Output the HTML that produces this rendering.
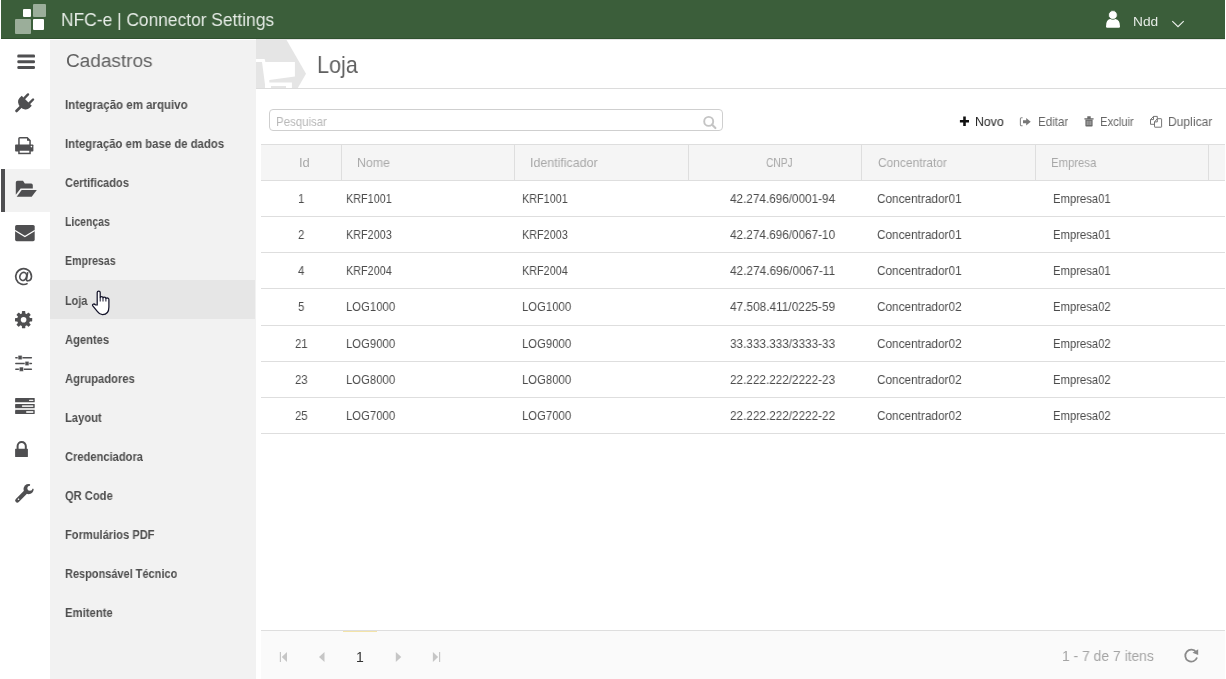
<!DOCTYPE html>
<html><head><meta charset="utf-8">
<style>
html,body{margin:0;padding:0;width:1226px;height:679px;overflow:hidden;background:#fff;position:relative;font-family:"Liberation Sans",sans-serif;}
.a{position:absolute;}
.t{position:absolute;line-height:0;white-space:nowrap;transform-origin:0 0;will-change:transform;}
#hdr{left:1px;top:0;width:1224px;height:38px;background:#3b5e3a;border-bottom:1px solid #2f512e;}
.sq{position:absolute;border-radius:1px;}
#side{left:50px;top:40px;width:206px;height:639px;background:#f2f2f2;}
.mi{position:absolute;left:65.6px;font-size:11.4px;font-weight:700;color:#505050;line-height:0;white-space:nowrap;}
.th{font-size:11.6px;color:#a9a9a9;}
.td{font-size:11.7px;color:#505050;}
.hl{position:absolute;left:261px;width:964px;height:1px;background:#dedede;}
.vl{position:absolute;top:144px;width:1px;height:36px;background:#dedede;}
</style></head>
<body>
<!-- header -->
<div id="hdr" class="a"></div>
<div class="sq" style="left:23px;top:9px;width:8px;height:8px;background:#fff"></div>
<div class="sq" style="left:32.5px;top:3.7px;width:13.5px;height:13.3px;background:#9bae9a"></div>
<div class="sq" style="left:15px;top:18.6px;width:16px;height:15.2px;background:#9bae9a"></div>
<div class="sq" style="left:32.5px;top:18.6px;width:11.5px;height:11.4px;background:#fff"></div>
<svg class="a" style="left:1100px;top:8px" width="26" height="24" viewBox="1100 8 26 24">
 <path d="M1106 26.5 Q1106 19.5 1110 19 L1115.4 19 Q1120 19.5 1120 26.5 Q1120 27.7 1118.8 27.7 L1107.2 27.7 Q1106 27.7 1106 26.5 Z" fill="#fff"/>
 <circle cx="1112.9" cy="15" r="4.4" fill="#fff" stroke="#3b5e3a" stroke-width="0.8"/>
</svg>
<svg class="a" style="left:1170px;top:18px" width="16" height="12" viewBox="1170 18 16 12">
 <path d="M1172.3 21.2 L1178 26.7 L1183.7 21.2" fill="none" stroke="#eef2ee" stroke-width="1.1"/>
</svg>

<!-- icon column -->
<div class="a" style="left:5px;top:169px;width:45px;height:43px;background:#f2f2f2"></div>
<div class="a" style="left:1px;top:169px;width:4px;height:43px;background:#4f4f51"></div>
<svg class="a" style="left:0;top:40px" width="50" height="639" viewBox="0 40 50 639">
 <g fill="#4f4f51">
  <!-- hamburger -->
  <rect x="17.3" y="54.6" width="17.7" height="3" rx="1.2"/>
  <rect x="17.3" y="60.3" width="17.7" height="3" rx="1.2"/>
  <rect x="17.3" y="66" width="17.7" height="3" rx="1.2"/>
  <!-- plug -->
  <g transform="translate(23.5 104) rotate(45)">
   <rect x="-4.75" y="-11.15" width="2.4" height="7.5" rx="1.2"/>
   <rect x="2.35" y="-11.15" width="2.4" height="7.5" rx="1.2"/>
   <path d="M-7.1 -4.6 H7.1 V-1.4 A7.1 5.8 0 0 1 -7.1 -1.4 Z"/>
   <rect x="-1.35" y="2" width="2.7" height="9.15" rx="1.2"/>
  </g>
  <!-- printer -->
  <path d="M18.95 145 V138.6 Q18.95 137.75 19.8 137.75 H27.2 L30.05 140.6 V145" fill="none" stroke="#4f4f51" stroke-width="1.5"/>
  <path d="M27 137.75 V140.8 H30.05 Z"/>
  <rect x="15.1" y="144.5" width="18.3" height="7.1" rx="0.8"/>
  <rect x="18.95" y="150" width="11.1" height="3.45" fill="#fff" stroke="#4f4f51" stroke-width="1.5"/>
  <circle cx="31.4" cy="146.6" r="0.8" fill="#fff"/>
  <!-- folder open -->
  <path d="M15.8 194.8 V182.6 Q15.8 180.8 17.6 180.8 H23 L24.8 183.6 H31.2 Q32.8 183.6 32.8 185.2 V188.6 H20.6 Z"/>
  <path d="M21.7 189.9 H36.8 L31.7 196.7 H16.7 Z"/>
  <!-- mail -->
  <rect x="15.1" y="225" width="19.6" height="16.2" rx="1.6"/>
  <path d="M15 230.5 L24.9 236.6 L34.8 230.5" fill="none" stroke="#fff" stroke-width="1.3"/>
  <!-- gear -->
  <g transform="translate(23.6 319.7)">
   <rect x="-1.7" y="-8.6" width="3.4" height="17.2" rx="0.6"/>
   <rect x="-1.7" y="-8.6" width="3.4" height="17.2" rx="0.6" transform="rotate(45)"/>
   <rect x="-1.7" y="-8.6" width="3.4" height="17.2" rx="0.6" transform="rotate(90)"/>
   <rect x="-1.7" y="-8.6" width="3.4" height="17.2" rx="0.6" transform="rotate(135)"/>
   <circle r="6.5"/>
   <circle r="2.8" fill="#fff"/>
  </g>
  <!-- sliders -->
  <rect x="15.1" y="357.05" width="17" height="1.5" rx="0.7"/>
  <rect x="15.1" y="362.75" width="17" height="1.5" rx="0.7"/>
  <rect x="15.1" y="368.45" width="17" height="1.5" rx="0.7"/>
  <rect x="18" y="355.3" width="4.2" height="4.5" rx="0.7" stroke="#fff" stroke-width="0.6"/>
  <rect x="25" y="361.3" width="4" height="4.4" rx="0.7" stroke="#fff" stroke-width="0.6"/>
  <rect x="19.3" y="367" width="4.2" height="4.4" rx="0.7" stroke="#fff" stroke-width="0.6"/>
  <!-- tasks -->
  <rect x="15.1" y="398" width="19.6" height="4.3" rx="0.4"/>
  <rect x="15.1" y="404.1" width="19.6" height="3.9" rx="0.4"/>
  <rect x="15.1" y="408" width="19.6" height="2" fill="#dcdcdc"/>
  <rect x="15.1" y="410" width="19.6" height="4" rx="0.4"/>
  <rect x="29" y="399.7" width="4.4" height="1.3" rx="0.6" fill="#eee"/>
  <rect x="21.9" y="405.3" width="11.5" height="1.6" rx="0.6" fill="#e4e4e4"/>
  <rect x="26.1" y="411.1" width="7.3" height="1.8" rx="0.6" fill="#e0e0e0"/>
  <!-- lock -->
  <rect x="15.1" y="448.7" width="12.8" height="8.2" rx="0.5"/>
  <path d="M17.6 449 V446.1 A4.1 4.1 0 0 1 25.8 446.1 V449" fill="none" stroke="#4f4f51" stroke-width="2"/>
  <!-- wrench -->
  <circle cx="28.6" cy="489.1" r="5.1"/>
  <path d="M25.2 492.6 L17.3 500.5" stroke="#4f4f51" stroke-width="4.2" stroke-linecap="round"/>
 </g>
 <circle cx="29.9" cy="488.3" r="2.5" fill="#fff"/>
 <path d="M29.9 488.3 L30.2 482.5 L36 482.5 L36 489.3 Z" fill="#fff"/>
 <circle cx="18.5" cy="499.3" r="0.8" fill="#fff"/>
 <!-- at -->
 <g fill="none" stroke="#4f4f51" stroke-width="1.65">
  <ellipse cx="23.2" cy="276.4" rx="3.3" ry="4.1" transform="rotate(20 23.2 276.4)"/>
  <path d="M27.7 272.2 L26.5 279.3 Q26.3 280.9 27.9 280.8 Q31.4 280.4 31.5 276.4 A7.9 7.9 0 1 0 27.6 283.4"/>
 </g>
</svg>

<!-- sidebar -->
<div id="side" class="a"></div>
<div class="a" style="left:50px;top:280px;width:205px;height:38.6px;background:#e6e6e6"></div>


<!-- page header -->
<div class="a" style="left:256px;top:39px;width:969px;height:1px;background:#e6e6e6"></div>
<svg class="a" style="left:256px;top:39px" width="970" height="50" viewBox="256 39 970 50">
 <path d="M256 39 L286 39 L306 73.8 L297.8 88 L256 88 Z" fill="#e5e5e5"/>
 <rect x="256" y="88" width="970" height="1" fill="#dcdcdc"/>
 <path d="M256 59.1 H264.2 Q264.9 59.1 265 60 L265.3 62 H294.9 V76.6 L269.3 79.9 V82.6 H291.9 V88 H286 V85.9 H271 V88 H265 V84.5 L262 62 L256 61.9 Z" fill="#fff"/>
</svg>

<!-- search -->
<div class="a" style="left:269px;top:109px;width:452px;height:20px;border:1px solid #cfcfcf;border-radius:4px;"></div>

<svg class="a" style="left:700px;top:112px" width="20" height="20" viewBox="700 112 20 20">
 <circle cx="708.7" cy="121.4" r="4.5" fill="none" stroke="#c4c4c4" stroke-width="1.9"/>
 <path d="M711.9 124.6 L715.4 128.1" stroke="#c4c4c4" stroke-width="2.1" stroke-linecap="round"/>
</svg>
<!-- toolbar -->
<svg class="a" style="left:955px;top:112px" width="270" height="18" viewBox="955 112 270 18">
 <path d="M964.5 116.5 V126 M959.9 121.3 H969" stroke="#111" stroke-width="2.6"/>
 <path d="M1022.6 117.8 H1021.3 Q1020.4 117.8 1020.4 118.8 V124.7 Q1020.4 125.7 1021.3 125.7 H1022.6" fill="none" stroke="#8a8a8a" stroke-width="1.1"/>
 <path d="M1023 120.3 H1026.2 V117.9 L1030.7 121.8 L1026.2 125.6 V123.3 H1023 Z" fill="#777"/>
 <path d="M1084.4 118.2 H1093.6 V119.5 H1084.4 Z M1087.3 116.3 H1090.7 V118.2 H1087.3 Z" fill="#6a6a6a"/>
 <path d="M1085.4 119.5 H1092.6 V125.7 Q1092.6 126.5 1091.8 126.5 H1086.2 Q1085.4 126.5 1085.4 125.7 Z" fill="#6a6a6a"/>
 <path d="M1087.2 120.8 V125 M1089 120.8 V125 M1090.8 120.8 V125" stroke="#bdbdbd" stroke-width="0.8"/>
 <path d="M1153.5 116.4 H1157.3 V118.6 M1153.5 116.4 L1150.5 119.6 V124.3 H1154.4 M1150.5 119.6 H1153.5 V116.4" fill="none" stroke="#6e6e6e" stroke-width="0.95"/>
 <path d="M1157.3 118.7 H1161.1 Q1161.6 118.7 1161.6 119.2 V126.8 Q1161.6 127.2 1161.1 127.2 H1154.9 Q1154.5 127.2 1154.5 126.8 V121.9 Z" fill="#fff" stroke="#6e6e6e" stroke-width="0.95"/>
 <path d="M1154.5 121.9 H1157.3 V118.7" fill="none" stroke="#6e6e6e" stroke-width="0.95"/>
</svg>

<!-- table -->
<div class="a" style="left:261px;top:145px;width:964px;height:35px;background:#f5f5f5"></div>
<div class="hl" style="top:144px"></div>
<div class="vl" style="left:341px"></div>
<div class="vl" style="left:514px"></div>
<div class="vl" style="left:688px"></div>
<div class="vl" style="left:861px"></div>
<div class="vl" style="left:1035px"></div>
<div class="vl" style="left:1208px"></div>
<div class="hl" style="top:180px"></div>
<div class="hl" style="top:216px"></div>
<div class="hl" style="top:252px"></div>
<div class="hl" style="top:288px"></div>
<div class="hl" style="top:325px"></div>
<div class="hl" style="top:361px"></div>
<div class="hl" style="top:397px"></div>
<div class="hl" style="top:433px"></div>

<!-- pager -->
<div class="a" style="left:261px;top:631px;width:964px;height:48px;background:#fafafa"></div>
<div class="hl" style="top:630px"></div>
<div class="a" style="left:343px;top:631px;width:34px;height:1px;background:#f3e3a8"></div>
<svg class="a" style="left:270px;top:645px" width="180" height="24" viewBox="270 645 180 24">
 <g fill="#c6c6c6">
  <rect x="279.8" y="652" width="1.2" height="10"/>
  <path d="M287 652 L281.8 657 L287 662 Z"/>
  <path d="M324.5 652 L319 657 L324.5 662 Z"/>
  <path d="M395.8 652 L401.3 657 L395.8 662 Z"/>
  <path d="M432.9 652 L438.1 657 L432.9 662 Z"/>
  <rect x="439" y="652" width="1.2" height="10"/>
 </g>
</svg>
<svg class="a" style="left:1180px;top:645px" width="22" height="22" viewBox="1180 645 22 22">
 <path d="M1196.2 652.2 A6 6 0 1 0 1197 657.5" fill="none" stroke="#8a8a8a" stroke-width="1.8"/>
 <path d="M1192.5 652.8 L1198.2 649.2 L1198.2 655 Z" fill="#8a8a8a"/>
</svg>
<div class="t" style="left:60.77px;top:19.56px;font-size:18.6px;color:#e6ece6;transform:scaleX(0.9345)">NFC-e | Connector Settings</div>
<div class="t" style="left:1132.79px;top:22.09px;font-size:13.6px;color:#e6ece6;transform:scaleX(1.0095)">Ndd</div>
<div class="t" style="left:65.60px;top:60.75px;font-size:19.2px;color:#606060;transform:scaleX(0.9901)">Cadastros</div>
<div class="t" style="left:65.40px;top:105.24px;font-size:12.0px;color:#4e4e4e;font-weight:700;transform:scaleX(0.9576)">Integração em arquivo</div>
<div class="t" style="left:65.40px;top:144.30px;font-size:12.0px;color:#4e4e4e;font-weight:700;transform:scaleX(0.9466)">Integração em base de dados</div>
<div class="t" style="left:65.40px;top:183.36px;font-size:12.0px;color:#4e4e4e;font-weight:700;transform:scaleX(0.9214)">Certificados</div>
<div class="t" style="left:65.40px;top:222.42px;font-size:12.0px;color:#4e4e4e;font-weight:700;transform:scaleX(0.8725)">Licenças</div>
<div class="t" style="left:65.40px;top:261.48px;font-size:12.0px;color:#4e4e4e;font-weight:700;transform:scaleX(0.8822)">Empresas</div>
<div class="t" style="left:65.40px;top:300.54px;font-size:12.0px;color:#4e4e4e;font-weight:700;transform:scaleX(0.9042)">Loja</div>
<div class="t" style="left:65.40px;top:339.60px;font-size:12.0px;color:#4e4e4e;font-weight:700;transform:scaleX(0.9293)">Agentes</div>
<div class="t" style="left:65.40px;top:378.66px;font-size:12.0px;color:#4e4e4e;font-weight:700;transform:scaleX(0.9346)">Agrupadores</div>
<div class="t" style="left:65.40px;top:417.72px;font-size:12.0px;color:#4e4e4e;font-weight:700;transform:scaleX(0.9329)">Layout</div>
<div class="t" style="left:65.40px;top:456.78px;font-size:12.0px;color:#4e4e4e;font-weight:700;transform:scaleX(0.9282)">Credenciadora</div>
<div class="t" style="left:65.40px;top:495.84px;font-size:12.0px;color:#4e4e4e;font-weight:700;transform:scaleX(0.9291)">QR Code</div>
<div class="t" style="left:65.40px;top:534.90px;font-size:12.0px;color:#4e4e4e;font-weight:700;transform:scaleX(0.9258)">Formulários PDF</div>
<div class="t" style="left:65.40px;top:573.96px;font-size:12.0px;color:#4e4e4e;font-weight:700;transform:scaleX(0.9143)">Responsável Técnico</div>
<div class="t" style="left:65.40px;top:613.02px;font-size:12.0px;color:#4e4e4e;font-weight:700;transform:scaleX(0.9411)">Emitente</div>
<div class="t" style="left:316.79px;top:64.65px;font-size:23.8px;color:#606060;transform:scaleX(0.9071)">Loja</div>
<div class="t" style="left:276.29px;top:121.63px;font-size:12.6px;color:#b8b8b8;transform:scaleX(0.9086)">Pesquisar</div>
<div class="t" style="left:975.22px;top:122.23px;font-size:12.6px;color:#222;transform:scaleX(0.9755)">Novo</div>
<div class="t" style="left:1037.58px;top:122.23px;font-size:12.6px;color:#666;transform:scaleX(0.9178)">Editar</div>
<div class="t" style="left:1100.01px;top:122.23px;font-size:12.6px;color:#666;transform:scaleX(0.8936)">Excluir</div>
<div class="t" style="left:1167.74px;top:122.23px;font-size:12.6px;color:#666;transform:scaleX(0.9600)">Duplicar</div>
<div class="t" style="left:298.97px;top:162.63px;font-size:12.6px;color:#a8a8a8;transform:scaleX(1.0317)">Id</div>
<div class="t" style="left:356.82px;top:162.63px;font-size:12.6px;color:#a8a8a8;transform:scaleX(0.9819)">Nome</div>
<div class="t" style="left:530.12px;top:162.63px;font-size:12.6px;color:#a8a8a8;transform:scaleX(0.9850)">Identificador</div>
<div class="t" style="left:765.60px;top:162.63px;font-size:12.6px;color:#a8a8a8;transform:scaleX(0.8131)">CNPJ</div>
<div class="t" style="left:877.70px;top:162.63px;font-size:12.6px;color:#a8a8a8;transform:scaleX(0.9476)">Concentrator</div>
<div class="t" style="left:1050.70px;top:162.63px;font-size:12.6px;color:#a8a8a8;transform:scaleX(0.8990)">Empresa</div>
<div class="t" style="left:297.79px;top:198.56px;font-size:12.8px;color:#4c4c4c;transform:scaleX(0.8896)">1</div>
<div class="t" style="left:345.65px;top:198.56px;font-size:12.8px;color:#4c4c4c;transform:scaleX(0.8462)">KRF1001</div>
<div class="t" style="left:522.15px;top:198.56px;font-size:12.8px;color:#4c4c4c;transform:scaleX(0.8462)">KRF1001</div>
<div class="t" style="left:730.00px;top:198.56px;font-size:12.8px;color:#4c4c4c;transform:scaleX(0.9174)">42.274.696/0001-94</div>
<div class="t" style="left:876.50px;top:198.56px;font-size:12.8px;color:#4c4c4c;transform:scaleX(0.9219)">Concentrador01</div>
<div class="t" style="left:1052.82px;top:198.56px;font-size:12.8px;color:#4c4c4c;transform:scaleX(0.8815)">Empresa01</div>
<div class="t" style="left:297.79px;top:234.81px;font-size:12.8px;color:#4c4c4c;transform:scaleX(0.8896)">2</div>
<div class="t" style="left:345.65px;top:234.81px;font-size:12.8px;color:#4c4c4c;transform:scaleX(0.8462)">KRF2003</div>
<div class="t" style="left:522.15px;top:234.81px;font-size:12.8px;color:#4c4c4c;transform:scaleX(0.8462)">KRF2003</div>
<div class="t" style="left:730.00px;top:234.81px;font-size:12.8px;color:#4c4c4c;transform:scaleX(0.9174)">42.274.696/0067-10</div>
<div class="t" style="left:876.50px;top:234.81px;font-size:12.8px;color:#4c4c4c;transform:scaleX(0.9219)">Concentrador01</div>
<div class="t" style="left:1052.82px;top:234.81px;font-size:12.8px;color:#4c4c4c;transform:scaleX(0.8815)">Empresa01</div>
<div class="t" style="left:297.79px;top:271.06px;font-size:12.8px;color:#4c4c4c;transform:scaleX(0.8896)">4</div>
<div class="t" style="left:345.65px;top:271.06px;font-size:12.8px;color:#4c4c4c;transform:scaleX(0.8462)">KRF2004</div>
<div class="t" style="left:522.15px;top:271.06px;font-size:12.8px;color:#4c4c4c;transform:scaleX(0.8462)">KRF2004</div>
<div class="t" style="left:730.00px;top:271.06px;font-size:12.8px;color:#4c4c4c;transform:scaleX(0.9251)">42.274.696/0067-11</div>
<div class="t" style="left:876.50px;top:271.06px;font-size:12.8px;color:#4c4c4c;transform:scaleX(0.9219)">Concentrador01</div>
<div class="t" style="left:1052.82px;top:271.06px;font-size:12.8px;color:#4c4c4c;transform:scaleX(0.8815)">Empresa01</div>
<div class="t" style="left:297.79px;top:307.31px;font-size:12.8px;color:#4c4c4c;transform:scaleX(0.8896)">5</div>
<div class="t" style="left:345.62px;top:307.31px;font-size:12.8px;color:#4c4c4c;transform:scaleX(0.8846)">LOG1000</div>
<div class="t" style="left:522.12px;top:307.31px;font-size:12.8px;color:#4c4c4c;transform:scaleX(0.8846)">LOG1000</div>
<div class="t" style="left:730.00px;top:307.31px;font-size:12.8px;color:#4c4c4c;transform:scaleX(0.9251)">47.508.411/0225-59</div>
<div class="t" style="left:876.50px;top:307.31px;font-size:12.8px;color:#4c4c4c;transform:scaleX(0.9219)">Concentrador02</div>
<div class="t" style="left:1052.82px;top:307.31px;font-size:12.8px;color:#4c4c4c;transform:scaleX(0.8815)">Empresa02</div>
<div class="t" style="left:294.62px;top:343.56px;font-size:12.8px;color:#4c4c4c;transform:scaleX(0.8896)">21</div>
<div class="t" style="left:345.62px;top:343.56px;font-size:12.8px;color:#4c4c4c;transform:scaleX(0.8846)">LOG9000</div>
<div class="t" style="left:522.12px;top:343.56px;font-size:12.8px;color:#4c4c4c;transform:scaleX(0.8846)">LOG9000</div>
<div class="t" style="left:730.00px;top:343.56px;font-size:12.8px;color:#4c4c4c;transform:scaleX(0.9174)">33.333.333/3333-33</div>
<div class="t" style="left:876.50px;top:343.56px;font-size:12.8px;color:#4c4c4c;transform:scaleX(0.9219)">Concentrador02</div>
<div class="t" style="left:1052.82px;top:343.56px;font-size:12.8px;color:#4c4c4c;transform:scaleX(0.8815)">Empresa02</div>
<div class="t" style="left:294.62px;top:379.81px;font-size:12.8px;color:#4c4c4c;transform:scaleX(0.8896)">23</div>
<div class="t" style="left:345.62px;top:379.81px;font-size:12.8px;color:#4c4c4c;transform:scaleX(0.8846)">LOG8000</div>
<div class="t" style="left:522.12px;top:379.81px;font-size:12.8px;color:#4c4c4c;transform:scaleX(0.8846)">LOG8000</div>
<div class="t" style="left:730.00px;top:379.81px;font-size:12.8px;color:#4c4c4c;transform:scaleX(0.9174)">22.222.222/2222-23</div>
<div class="t" style="left:876.50px;top:379.81px;font-size:12.8px;color:#4c4c4c;transform:scaleX(0.9219)">Concentrador02</div>
<div class="t" style="left:1052.82px;top:379.81px;font-size:12.8px;color:#4c4c4c;transform:scaleX(0.8815)">Empresa02</div>
<div class="t" style="left:294.62px;top:416.06px;font-size:12.8px;color:#4c4c4c;transform:scaleX(0.8896)">25</div>
<div class="t" style="left:345.62px;top:416.06px;font-size:12.8px;color:#4c4c4c;transform:scaleX(0.8846)">LOG7000</div>
<div class="t" style="left:522.12px;top:416.06px;font-size:12.8px;color:#4c4c4c;transform:scaleX(0.8846)">LOG7000</div>
<div class="t" style="left:730.00px;top:416.06px;font-size:12.8px;color:#4c4c4c;transform:scaleX(0.9174)">22.222.222/2222-22</div>
<div class="t" style="left:876.50px;top:416.06px;font-size:12.8px;color:#4c4c4c;transform:scaleX(0.9219)">Concentrador02</div>
<div class="t" style="left:1052.82px;top:416.06px;font-size:12.8px;color:#4c4c4c;transform:scaleX(0.8815)">Empresa02</div>
<div class="t" style="left:355.50px;top:656.65px;font-size:14.0px;color:#333">1</div>
<div class="t" style="left:1062.22px;top:655.98px;font-size:14.2px;color:#a4a4a4;transform:scaleX(0.9789)">1 - 7 de 7 itens</div>
<svg class="a" style="left:90px;top:289px" width="22" height="28" viewBox="90 289 22 28">
 <path d="M97.2 305 V292.6 Q97.2 291 98.7 291 Q100.2 291 100.2 292.6 V297.6 Q100.4 296.5 101.6 296.5 Q102.9 296.5 103 297.8 Q103.3 297 104.5 297 Q105.8 297 105.9 298.4 Q106.2 297.8 107.3 297.8 Q108.9 297.9 108.9 299.5 V307 Q108.9 314.6 102.5 314.6 Q99.5 314.6 97.5 311.7 L92.8 305.9 Q92.1 304.7 93.1 304.2 Q94.4 303.6 95.5 304.8 Z" fill="#fff" stroke="#14142a" stroke-width="1.25" stroke-linejoin="round"/>
 <path d="M100.2 297.6 V301.5 M103 297.8 V301.5 M105.9 298.4 V301.5" stroke="#14142a" stroke-width="1"/>
</svg>
</body></html>
